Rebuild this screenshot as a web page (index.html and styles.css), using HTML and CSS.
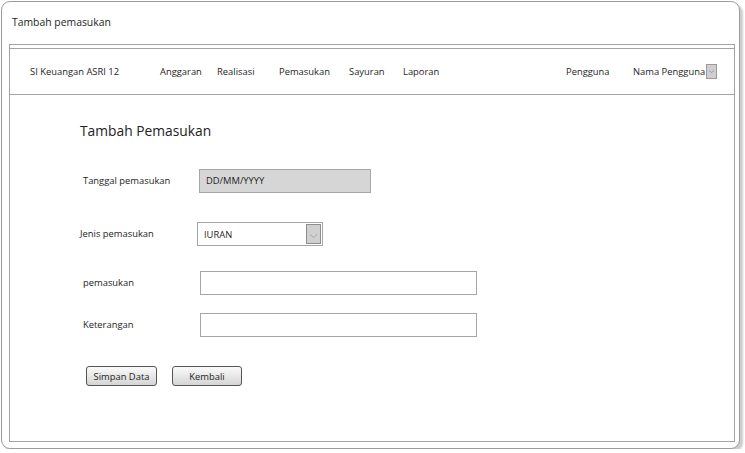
FILE: index.html
```html
<!DOCTYPE html>
<html lang="id">
<head>
<meta charset="utf-8">
<title>Tambah pemasukan</title>
<link rel="stylesheet" href="styles.css">
</head>
<body>
<div class="window">
  <div class="win-title">Tambah pemasukan</div>
  <div class="frame">
    <nav class="navbar">
      <span class="brand">SI Keuangan ASRI 12</span>
      <span>Anggaran</span>
      <span>Realisasi</span>
      <span>Pemasukan</span>
      <span>Sayuran</span>
      <span>Laporan</span>
      <span>Pengguna</span>
      <span class="user">Nama Pengguna<span class="mini-drop"><svg width="7" height="5" viewBox="0 0 7 5"><path d="M1 1.5 L3.5 3.5 L6 1.5" fill="none" stroke="#9a9a9a" stroke-width="1"/></svg></span></span>
    </nav>
    <main class="content">
      <h1 class="heading">Tambah Pemasukan</h1>
      <div class="row row-date">
        <label class="label">Tanggal pemasukan</label>
        <div class="field field-date">DD/MM/YYYY</div>
      </div>
      <div class="row row-jenis">
        <label class="label">Jenis pemasukan</label>
        <div class="field field-select"><span class="sel-text">IURAN</span><span class="sel-btn"><svg width="9" height="6" viewBox="0 0 9 6"><path d="M1 1.5 L4.5 4.5 L8 1.5" fill="none" stroke="#a8a8a8" stroke-width="1"/></svg></span></div>
      </div>
      <div class="row row-nominal">
        <label class="label">pemasukan</label>
        <div class="field field-text"></div>
      </div>
      <div class="row row-ket">
        <label class="label">Keterangan</label>
        <div class="field field-text"></div>
      </div>
      <div class="actions">
        <button class="btn btn-save">Simpan Data</button>
        <button class="btn btn-back">Kembali</button>
      </div>
    </main>
  </div>
</div>
</body>
</html>
```
FILE: styles.css
```css
* { box-sizing: border-box; }
html, body { margin: 0; padding: 0; background: #fff; }
body {
  font-family: "Open Sans", "Noto Sans", "Liberation Sans", sans-serif;
  font-size: 9.4px;
  color: #1e1e1e;
}
.window {
  margin: 1px 0 0 1px;
  width: 739px;
  height: 448px;
  border: 1px solid #9c9c9c;
  border-radius: 9px;
  box-shadow: 3px 3px 2px #cdcdcd;
  background: #fff;
  padding: 0 4px 0 7px;
}
.win-title {
  height: 42px;
  padding: 13px 0 0 3px;
  font-size: 10.4px;
  line-height: 14px;
}
.frame {
  height: 398px;
  border: 1px solid #a3a3a3;
  padding-top: 3px;
}
.navbar {
  height: 47px;
  border-top: 1px solid #a3a3a3;
  border-bottom: 1px solid #a3a3a3;
  display: grid;
  grid-template-columns: 130px 57px 62px 70px 54px 163px 67px auto;
  align-items: center;
  padding: 0 0 0 20px;
  line-height: 14px;
}
.user { display: flex; align-items: center; }
.mini-drop {
  display: inline-flex;
  align-items: center;
  justify-content: center;
  width: 11px;
  height: 15px;
  margin-left: 1px;
  background: #cfcfcf;
  border: 1px solid #9a9a9a;
}
.content { padding: 26px 0 0 0; }
.heading {
  margin: 0 0 0 70px;
  font-size: 13.8px;
  font-weight: normal;
  line-height: 20px;
  color: #222;
}
.row { display: flex; align-items: center; }
.label { display: block; width: 116px; line-height: 14px; }
.field {
  height: 24px;
  border: 1px solid #a6a6a6;
  background: #fff;
}
.row-date { margin: 28px 0 0 73px; }
.field-date {
  width: 172px;
  background: #d6d6d6;
  padding: 4px 0 0 6px;
  line-height: 14px;
}
.row-jenis { margin: 29px 0 0 70px; }
.row-jenis .label { width: 117px; }
.field-select {
  width: 126px;
  display: flex;
  align-items: center;
  justify-content: space-between;
  padding: 1px 1px 1px 6px;
}
.sel-btn {
  width: 15px;
  height: 20px;
  background: #d0d0d0;
  border: 1px solid #8e8e8e;
  display: flex;
  align-items: center;
  justify-content: center;
  padding-top: 3px;
}
.row-nominal { margin: 25px 0 0 73px; }
.row-nominal .label, .row-ket .label { width: 117px; }
.row-ket { margin: 18px 0 0 73px; }
.field-text { width: 277px; }
.actions {
  margin: 29px 0 0 76px;
  display: flex;
  gap: 15px;
}
.btn {
  height: 20px;
  padding: 0;
  font-family: inherit;
  font-size: 9.4px;
  color: #1e1e1e;
  border: 1px solid #555;
  border-radius: 3px;
  background: linear-gradient(#fafafa, #e4e4e4 60%, #d4d4d4);
}
.btn-save { width: 71px; }
.btn-back { width: 70px; }
```
